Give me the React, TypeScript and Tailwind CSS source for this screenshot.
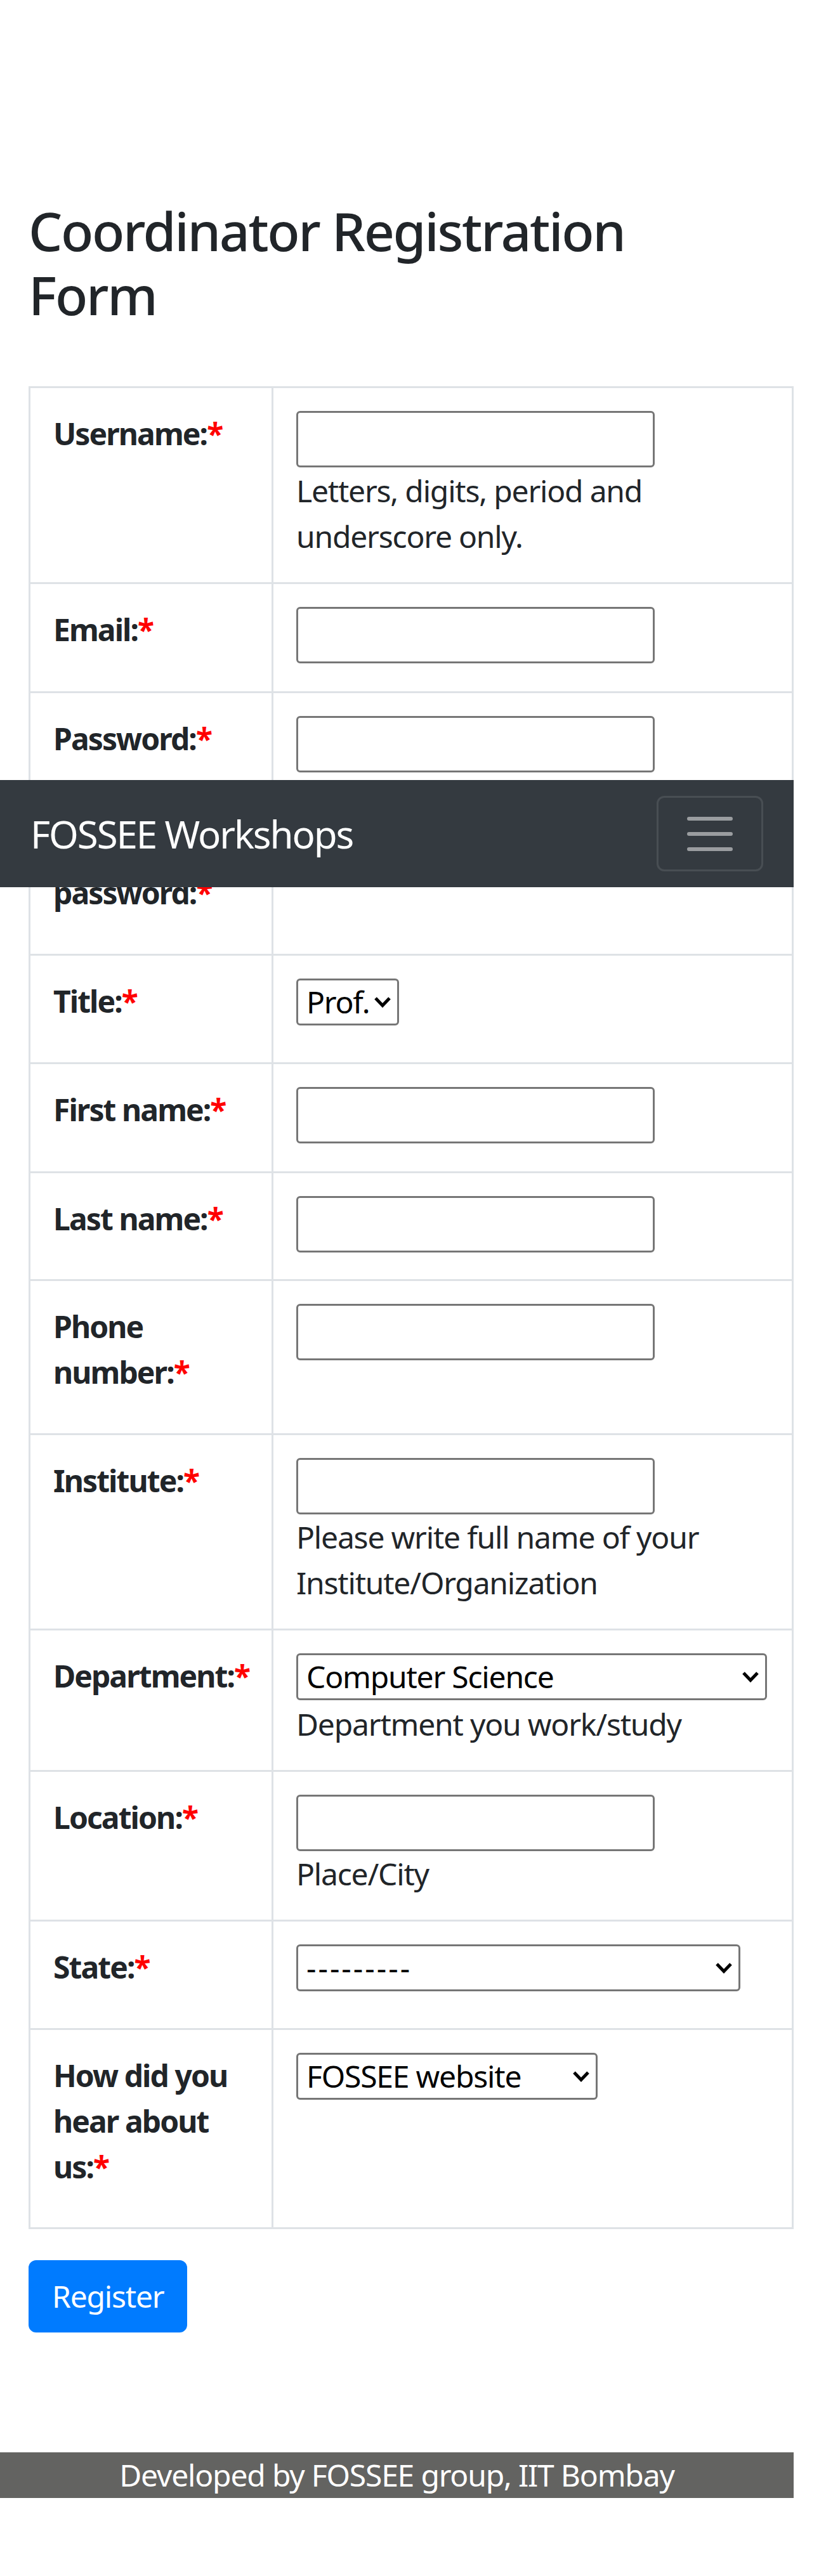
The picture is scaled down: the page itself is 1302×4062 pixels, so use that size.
import React from "react";
import clsx from "clsx";

function TextInput({ type = "text" }: { type?: string }) {
  return (
    <input
      type={type}
      className="block w-[565px] h-[89px] border-[3px] border-[#767676] rounded-[6px] bg-white px-[6px]"
    />
  );
}

function Select({
  value,
  width,
  textClass,
}: {
  value: string;
  width: string;
  textClass?: string;
}) {
  return (
    <div className={clsx("relative h-[74px]", width)}>
      <select
        defaultValue={value}
        className={clsx(
          "appearance-none block w-full h-full border-[3px] border-[#767676] rounded-[6px] bg-white pl-[13px] pr-[34px] text-black leading-[66px]",
          textClass
        )}
      >
        <option>{value}</option>
      </select>
      <svg
        className="absolute right-[12px] top-[28px] pointer-events-none"
        width="28"
        height="18"
        viewBox="0 0 28 18"
      >
        <path d="M3 3 L14 14.5 L25 3" stroke="#000" strokeWidth="5" fill="none" />
      </svg>
    </div>
  );
}

function Req() {
  return <span className="text-[#ff0000]">*</span>;
}

function Row({
  label,
  children,
}: {
  label: React.ReactNode;
  children: React.ReactNode;
}) {
  return (
    <div className="flex">
      <div className="w-[383px] shrink-0 border-r-[3px] border-b-[3px] border-[#dee2e6] p-[36px] font-bold tracking-[-0.04em]">
        {label}
      </div>
      <div className="w-[820px] shrink-0 border-r-[3px] border-b-[3px] border-[#dee2e6] p-[36px]">
        {children}
      </div>
    </div>
  );
}

export default function App() {
  return (
    <div className="relative w-[1251px] bg-white font-['Noto_Sans',sans-serif] text-[48px] leading-[72px] text-[#212529] tracking-[-0.025em]">
      <nav className="absolute top-[1230px] left-0 z-10 w-full h-[169px] bg-[#343a40] px-[48px] flex items-center justify-between">
        <span className="text-[60px] leading-[90px] text-white tracking-[-0.035em]">
          FOSSEE Workshops
        </span>
        <button className="w-[168px] h-[119px] border-[3px] border-white/10 rounded-[12px] flex items-center justify-center">
          <svg width="90" height="90" viewBox="0 0 30 30">
            <path
              d="M4 7h22M4 15h22M4 23h22"
              stroke="rgba(255,255,255,0.5)"
              strokeWidth="2"
              strokeLinecap="round"
            />
          </svg>
        </button>
      </nav>

      <main className="px-[45px] pt-[314px]">
        <h3 className="text-[84px] leading-[100.8px] font-medium tracking-[-0.028em]">
          Coordinator Registration
          <br />
          Form
        </h3>

        <div className="mt-[93px] w-[1206px] border-t-[3px] border-l-[3px] border-[#dee2e6]">
          <Row label={<>Username:<Req /></>}>
            <div className="h-[90px]">
              <TextInput />
            </div>
            <div>
              Letters, digits, period and
              <br />
              underscore only.
            </div>
          </Row>
          <Row label={<>Email:<Req /></>}>
            <div className="h-[97px]">
              <TextInput />
            </div>
          </Row>
          <Row label={<>Password:<Req /></>}>
            <div className="h-[96px]">
              <TextInput type="password" />
            </div>
          </Row>
          <Row label={<>Confirm<br />password:<Req /></>}>
            <div className="h-[168px]">
              <TextInput type="password" />
            </div>
          </Row>
          <Row label={<>Title:<Req /></>}>
            <div className="h-[96px]">
              <Select value="Prof." width="w-[162px]" />
            </div>
          </Row>
          <Row label={<>First name:<Req /></>}>
            <div className="h-[97px]">
              <TextInput />
            </div>
          </Row>
          <Row label={<>Last name:<Req /></>}>
            <div className="h-[95px]">
              <TextInput />
            </div>
          </Row>
          <Row label={<>Phone<br />number:<Req /></>}>
            <div className="h-[168px]">
              <TextInput />
            </div>
          </Row>
          <Row label={<>Institute:<Req /></>}>
            <div className="h-[89px]">
              <TextInput />
            </div>
            <div>
              Please write full name of your
              <br />
              Institute/Organization
            </div>
          </Row>
          <Row label={<>Department:<Req /></>}>
            <div className="h-[76px]">
              <Select value="Computer Science" width="w-[742px]" />
            </div>
            <div>Department you work/study</div>
          </Row>
          <Row label={<>Location:<Req /></>}>
            <div className="h-[89px]">
              <TextInput />
            </div>
            <div>Place/City</div>
          </Row>
          <Row label={<>State:<Req /></>}>
            <div className="h-[96px]">
              <Select
                value="---------"
                width="w-[700px]"
                textClass="tracking-[3px]"
              />
            </div>
          </Row>
          <Row label={<>How did you<br />hear about<br />us:<Req /></>}>
            <div className="h-[239px]">
              <Select value="FOSSEE website" width="w-[475px]" />
            </div>
          </Row>
        </div>

        <button className="mt-[49px] bg-[#007bff] border-[3px] border-[#007bff] rounded-[12px] px-[34px] py-[18px] text-white">
          Register
        </button>
      </main>

      <footer className="mt-[189px] h-[72px] bg-[#636361] text-white text-center">
        Developed by FOSSEE group, IIT Bombay
      </footer>
    </div>
  );
}
